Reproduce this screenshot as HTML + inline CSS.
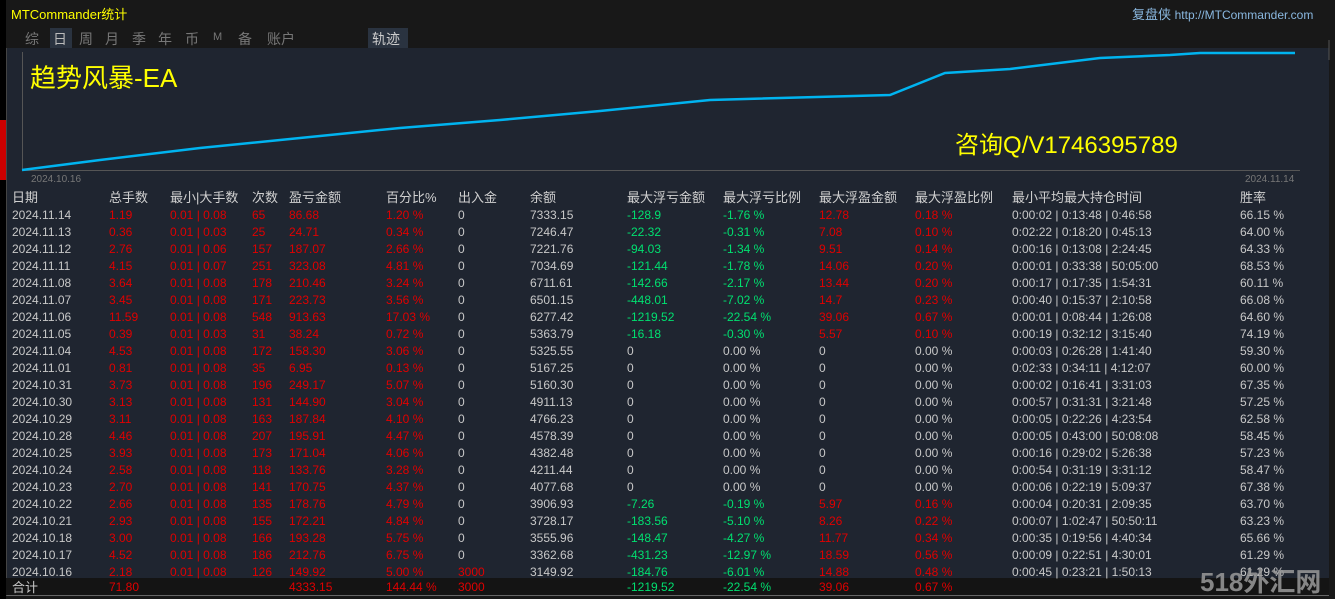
<!DOCTYPE html>
<html><head><meta charset="utf-8"><style>
*{margin:0;padding:0;box-sizing:border-box}
body{width:1335px;height:599px;background:#181818;overflow:hidden;position:relative;font-family:"Liberation Sans","Noto Sans CJK SC",sans-serif;font-size:12px;color:#c8c8c8}
.abs{position:absolute;white-space:nowrap}
#panel{position:absolute;left:6px;top:48px;width:1323px;height:548px;background:#1f2530;border-left:1px solid #444;border-bottom:1px solid #666}
.r{position:absolute;left:0;height:17px;width:1330px;line-height:17px}
.r span{position:absolute;white-space:nowrap}
.c0{left:12px}.c1{left:109px}.c2{left:170px}.c3{left:252px}.c4{left:289px}.c5{left:386px}.c6{left:458px}.c7{left:530px}.c8{left:627px}.c9{left:723px}.c10{left:819px}.c11{left:915px}.c12{left:1012px}.c13{left:1240px}
.R{color:#e00000}.G{color:#00e070}
.h span{font-size:13px;color:#d0d0d0}
.t{position:absolute;top:29px;color:#777;font-size:14px}
</style></head><body>
<div class="abs" style="left:0;top:0;width:6px;height:599px;background:#000"></div>
<div class="abs" style="left:0;top:120px;width:6px;height:60px;background:#c00"></div>
<div class="abs" style="left:11px;top:4px;color:#ffff00;font-size:13px">MTCommander统计</div>
<div class="abs" style="left:1132px;top:4px;color:#8ab8e0;font-size:13px">复盘侠 <span style="font-size:12px">http://MTCommander.com</span></div>
<div class="abs" style="left:50px;top:28px;width:22px;height:20px;background:#2a3340"></div>
<div class="abs" style="left:368px;top:28px;width:40px;height:20px;background:#2a3340"></div>
<span class="t" style="left:25px">综</span><span class="t" style="left:53px;color:#bbb">日</span><span class="t" style="left:79px">周</span><span class="t" style="left:105px">月</span><span class="t" style="left:132px">季</span><span class="t" style="left:158px">年</span><span class="t" style="left:185px">币</span><span class="t" style="left:213px;font-size:11px;top:31px">M</span><span class="t" style="left:238px">备</span><span class="t" style="left:267px">账户</span>
<div class="abs" style="left:372px;top:29px;color:#ccc;font-size:14px">轨迹</div>
<div id="panel"></div>
<svg class="abs" style="left:0;top:0" width="1335" height="200">
<line x1="22.5" y1="52" x2="22.5" y2="170" stroke="#555" stroke-width="1"/>
<line x1="22" y1="170.5" x2="1300" y2="170.5" stroke="#555"/>
<polyline fill="none" stroke="#00b4f0" stroke-width="2.5" points="22,170 100,160 200,148 300,138 400,128 500,120 600,111 710,100 890,95 945,73 1010,69 1100,58 1170,55 1200,53 1295,53"/>
<line x1="1329" y1="40" x2="1329" y2="60" stroke="#555"/>
</svg>
<div class="abs" style="left:30px;top:58px;color:#ffff00;font-size:26px">趋势风暴-EA</div>
<div class="abs" style="left:955px;top:125px;color:#ffff00;font-size:24px">咨询Q/V1746395789</div>
<div class="abs" style="left:31px;top:174px;color:#777;font-size:10px">2024.10.16</div>
<div class="abs" style="left:1245px;top:174px;color:#777;font-size:10px">2024.11.14</div>
<div class="abs" style="left:6px;top:578px;width:1323px;height:17px;background:#141414"></div>
<div class="abs" style="left:0;top:0;width:1335px">
<div class="r h" style="top:189px"><span class="c0">日期</span><span class="c1">总手数</span><span class="c2">最小|大手数</span><span class="c3">次数</span><span class="c4">盈亏金额</span><span class="c5">百分比%</span><span class="c6">出入金</span><span class="c7">余额</span><span class="c8">最大浮亏金额</span><span class="c9">最大浮亏比例</span><span class="c10">最大浮盈金额</span><span class="c11">最大浮盈比例</span><span class="c12">最小平均最大持仓时间</span><span class="c13">胜率</span></div>
<div class="r" style="top:207px"><span class="c0">2024.11.14</span><span class="c1 R">1.19</span><span class="c2 R">0.01 | 0.08</span><span class="c3 R">65</span><span class="c4 R">86.68</span><span class="c5 R">1.20 %</span><span class="c6">0</span><span class="c7">7333.15</span><span class="c8 G">-128.9</span><span class="c9 G">-1.76 %</span><span class="c10 R">12.78</span><span class="c11 R">0.18 %</span><span class="c12">0:00:02 | 0:13:48 | 0:46:58</span><span class="c13">66.15 %</span></div>
<div class="r" style="top:224px"><span class="c0">2024.11.13</span><span class="c1 R">0.36</span><span class="c2 R">0.01 | 0.03</span><span class="c3 R">25</span><span class="c4 R">24.71</span><span class="c5 R">0.34 %</span><span class="c6">0</span><span class="c7">7246.47</span><span class="c8 G">-22.32</span><span class="c9 G">-0.31 %</span><span class="c10 R">7.08</span><span class="c11 R">0.10 %</span><span class="c12">0:02:22 | 0:18:20 | 0:45:13</span><span class="c13">64.00 %</span></div>
<div class="r" style="top:241px"><span class="c0">2024.11.12</span><span class="c1 R">2.76</span><span class="c2 R">0.01 | 0.06</span><span class="c3 R">157</span><span class="c4 R">187.07</span><span class="c5 R">2.66 %</span><span class="c6">0</span><span class="c7">7221.76</span><span class="c8 G">-94.03</span><span class="c9 G">-1.34 %</span><span class="c10 R">9.51</span><span class="c11 R">0.14 %</span><span class="c12">0:00:16 | 0:13:08 | 2:24:45</span><span class="c13">64.33 %</span></div>
<div class="r" style="top:258px"><span class="c0">2024.11.11</span><span class="c1 R">4.15</span><span class="c2 R">0.01 | 0.07</span><span class="c3 R">251</span><span class="c4 R">323.08</span><span class="c5 R">4.81 %</span><span class="c6">0</span><span class="c7">7034.69</span><span class="c8 G">-121.44</span><span class="c9 G">-1.78 %</span><span class="c10 R">14.06</span><span class="c11 R">0.20 %</span><span class="c12">0:00:01 | 0:33:38 | 50:05:00</span><span class="c13">68.53 %</span></div>
<div class="r" style="top:275px"><span class="c0">2024.11.08</span><span class="c1 R">3.64</span><span class="c2 R">0.01 | 0.08</span><span class="c3 R">178</span><span class="c4 R">210.46</span><span class="c5 R">3.24 %</span><span class="c6">0</span><span class="c7">6711.61</span><span class="c8 G">-142.66</span><span class="c9 G">-2.17 %</span><span class="c10 R">13.44</span><span class="c11 R">0.20 %</span><span class="c12">0:00:17 | 0:17:35 | 1:54:31</span><span class="c13">60.11 %</span></div>
<div class="r" style="top:292px"><span class="c0">2024.11.07</span><span class="c1 R">3.45</span><span class="c2 R">0.01 | 0.08</span><span class="c3 R">171</span><span class="c4 R">223.73</span><span class="c5 R">3.56 %</span><span class="c6">0</span><span class="c7">6501.15</span><span class="c8 G">-448.01</span><span class="c9 G">-7.02 %</span><span class="c10 R">14.7</span><span class="c11 R">0.23 %</span><span class="c12">0:00:40 | 0:15:37 | 2:10:58</span><span class="c13">66.08 %</span></div>
<div class="r" style="top:309px"><span class="c0">2024.11.06</span><span class="c1 R">11.59</span><span class="c2 R">0.01 | 0.08</span><span class="c3 R">548</span><span class="c4 R">913.63</span><span class="c5 R">17.03 %</span><span class="c6">0</span><span class="c7">6277.42</span><span class="c8 G">-1219.52</span><span class="c9 G">-22.54 %</span><span class="c10 R">39.06</span><span class="c11 R">0.67 %</span><span class="c12">0:00:01 | 0:08:44 | 1:26:08</span><span class="c13">64.60 %</span></div>
<div class="r" style="top:326px"><span class="c0">2024.11.05</span><span class="c1 R">0.39</span><span class="c2 R">0.01 | 0.03</span><span class="c3 R">31</span><span class="c4 R">38.24</span><span class="c5 R">0.72 %</span><span class="c6">0</span><span class="c7">5363.79</span><span class="c8 G">-16.18</span><span class="c9 G">-0.30 %</span><span class="c10 R">5.57</span><span class="c11 R">0.10 %</span><span class="c12">0:00:19 | 0:32:12 | 3:15:40</span><span class="c13">74.19 %</span></div>
<div class="r" style="top:343px"><span class="c0">2024.11.04</span><span class="c1 R">4.53</span><span class="c2 R">0.01 | 0.08</span><span class="c3 R">172</span><span class="c4 R">158.30</span><span class="c5 R">3.06 %</span><span class="c6">0</span><span class="c7">5325.55</span><span class="c8">0</span><span class="c9">0.00 %</span><span class="c10">0</span><span class="c11">0.00 %</span><span class="c12">0:00:03 | 0:26:28 | 1:41:40</span><span class="c13">59.30 %</span></div>
<div class="r" style="top:360px"><span class="c0">2024.11.01</span><span class="c1 R">0.81</span><span class="c2 R">0.01 | 0.08</span><span class="c3 R">35</span><span class="c4 R">6.95</span><span class="c5 R">0.13 %</span><span class="c6">0</span><span class="c7">5167.25</span><span class="c8">0</span><span class="c9">0.00 %</span><span class="c10">0</span><span class="c11">0.00 %</span><span class="c12">0:02:33 | 0:34:11 | 4:12:07</span><span class="c13">60.00 %</span></div>
<div class="r" style="top:377px"><span class="c0">2024.10.31</span><span class="c1 R">3.73</span><span class="c2 R">0.01 | 0.08</span><span class="c3 R">196</span><span class="c4 R">249.17</span><span class="c5 R">5.07 %</span><span class="c6">0</span><span class="c7">5160.30</span><span class="c8">0</span><span class="c9">0.00 %</span><span class="c10">0</span><span class="c11">0.00 %</span><span class="c12">0:00:02 | 0:16:41 | 3:31:03</span><span class="c13">67.35 %</span></div>
<div class="r" style="top:394px"><span class="c0">2024.10.30</span><span class="c1 R">3.13</span><span class="c2 R">0.01 | 0.08</span><span class="c3 R">131</span><span class="c4 R">144.90</span><span class="c5 R">3.04 %</span><span class="c6">0</span><span class="c7">4911.13</span><span class="c8">0</span><span class="c9">0.00 %</span><span class="c10">0</span><span class="c11">0.00 %</span><span class="c12">0:00:57 | 0:31:31 | 3:21:48</span><span class="c13">57.25 %</span></div>
<div class="r" style="top:411px"><span class="c0">2024.10.29</span><span class="c1 R">3.11</span><span class="c2 R">0.01 | 0.08</span><span class="c3 R">163</span><span class="c4 R">187.84</span><span class="c5 R">4.10 %</span><span class="c6">0</span><span class="c7">4766.23</span><span class="c8">0</span><span class="c9">0.00 %</span><span class="c10">0</span><span class="c11">0.00 %</span><span class="c12">0:00:05 | 0:22:26 | 4:23:54</span><span class="c13">62.58 %</span></div>
<div class="r" style="top:428px"><span class="c0">2024.10.28</span><span class="c1 R">4.46</span><span class="c2 R">0.01 | 0.08</span><span class="c3 R">207</span><span class="c4 R">195.91</span><span class="c5 R">4.47 %</span><span class="c6">0</span><span class="c7">4578.39</span><span class="c8">0</span><span class="c9">0.00 %</span><span class="c10">0</span><span class="c11">0.00 %</span><span class="c12">0:00:05 | 0:43:00 | 50:08:08</span><span class="c13">58.45 %</span></div>
<div class="r" style="top:445px"><span class="c0">2024.10.25</span><span class="c1 R">3.93</span><span class="c2 R">0.01 | 0.08</span><span class="c3 R">173</span><span class="c4 R">171.04</span><span class="c5 R">4.06 %</span><span class="c6">0</span><span class="c7">4382.48</span><span class="c8">0</span><span class="c9">0.00 %</span><span class="c10">0</span><span class="c11">0.00 %</span><span class="c12">0:00:16 | 0:29:02 | 5:26:38</span><span class="c13">57.23 %</span></div>
<div class="r" style="top:462px"><span class="c0">2024.10.24</span><span class="c1 R">2.58</span><span class="c2 R">0.01 | 0.08</span><span class="c3 R">118</span><span class="c4 R">133.76</span><span class="c5 R">3.28 %</span><span class="c6">0</span><span class="c7">4211.44</span><span class="c8">0</span><span class="c9">0.00 %</span><span class="c10">0</span><span class="c11">0.00 %</span><span class="c12">0:00:54 | 0:31:19 | 3:31:12</span><span class="c13">58.47 %</span></div>
<div class="r" style="top:479px"><span class="c0">2024.10.23</span><span class="c1 R">2.70</span><span class="c2 R">0.01 | 0.08</span><span class="c3 R">141</span><span class="c4 R">170.75</span><span class="c5 R">4.37 %</span><span class="c6">0</span><span class="c7">4077.68</span><span class="c8">0</span><span class="c9">0.00 %</span><span class="c10">0</span><span class="c11">0.00 %</span><span class="c12">0:00:06 | 0:22:19 | 5:09:37</span><span class="c13">67.38 %</span></div>
<div class="r" style="top:496px"><span class="c0">2024.10.22</span><span class="c1 R">2.66</span><span class="c2 R">0.01 | 0.08</span><span class="c3 R">135</span><span class="c4 R">178.76</span><span class="c5 R">4.79 %</span><span class="c6">0</span><span class="c7">3906.93</span><span class="c8 G">-7.26</span><span class="c9 G">-0.19 %</span><span class="c10 R">5.97</span><span class="c11 R">0.16 %</span><span class="c12">0:00:04 | 0:20:31 | 2:09:35</span><span class="c13">63.70 %</span></div>
<div class="r" style="top:513px"><span class="c0">2024.10.21</span><span class="c1 R">2.93</span><span class="c2 R">0.01 | 0.08</span><span class="c3 R">155</span><span class="c4 R">172.21</span><span class="c5 R">4.84 %</span><span class="c6">0</span><span class="c7">3728.17</span><span class="c8 G">-183.56</span><span class="c9 G">-5.10 %</span><span class="c10 R">8.26</span><span class="c11 R">0.22 %</span><span class="c12">0:00:07 | 1:02:47 | 50:50:11</span><span class="c13">63.23 %</span></div>
<div class="r" style="top:530px"><span class="c0">2024.10.18</span><span class="c1 R">3.00</span><span class="c2 R">0.01 | 0.08</span><span class="c3 R">166</span><span class="c4 R">193.28</span><span class="c5 R">5.75 %</span><span class="c6">0</span><span class="c7">3555.96</span><span class="c8 G">-148.47</span><span class="c9 G">-4.27 %</span><span class="c10 R">11.77</span><span class="c11 R">0.34 %</span><span class="c12">0:00:35 | 0:19:56 | 4:40:34</span><span class="c13">65.66 %</span></div>
<div class="r" style="top:547px"><span class="c0">2024.10.17</span><span class="c1 R">4.52</span><span class="c2 R">0.01 | 0.08</span><span class="c3 R">186</span><span class="c4 R">212.76</span><span class="c5 R">6.75 %</span><span class="c6">0</span><span class="c7">3362.68</span><span class="c8 G">-431.23</span><span class="c9 G">-12.97 %</span><span class="c10 R">18.59</span><span class="c11 R">0.56 %</span><span class="c12">0:00:09 | 0:22:51 | 4:30:01</span><span class="c13">61.29 %</span></div>
<div class="r" style="top:564px"><span class="c0">2024.10.16</span><span class="c1 R">2.18</span><span class="c2 R">0.01 | 0.08</span><span class="c3 R">126</span><span class="c4 R">149.92</span><span class="c5 R">5.00 %</span><span class="c6 R">3000</span><span class="c7">3149.92</span><span class="c8 G">-184.76</span><span class="c9 G">-6.01 %</span><span class="c10 R">14.88</span><span class="c11 R">0.48 %</span><span class="c12">0:00:45 | 0:23:21 | 1:50:13</span><span class="c13">61.29 %</span></div>
<div class="r" style="top:579px"><span class="c0" style="font-size:13px">合计</span><span class="c1 R">71.80</span><span class="c4 R">4333.15</span><span class="c5 R">144.44 %</span><span class="c6 R">3000</span><span class="c8 G">-1219.52</span><span class="c9 G">-22.54 %</span><span class="c10 R">39.06</span><span class="c11 R">0.67 %</span></div>
</div>
<div class="abs" style="left:1200px;top:562px;width:130px;height:30px;color:#9a9a9a;font-size:26px;font-weight:bold;opacity:.85">518外汇网</div>
</body></html>
